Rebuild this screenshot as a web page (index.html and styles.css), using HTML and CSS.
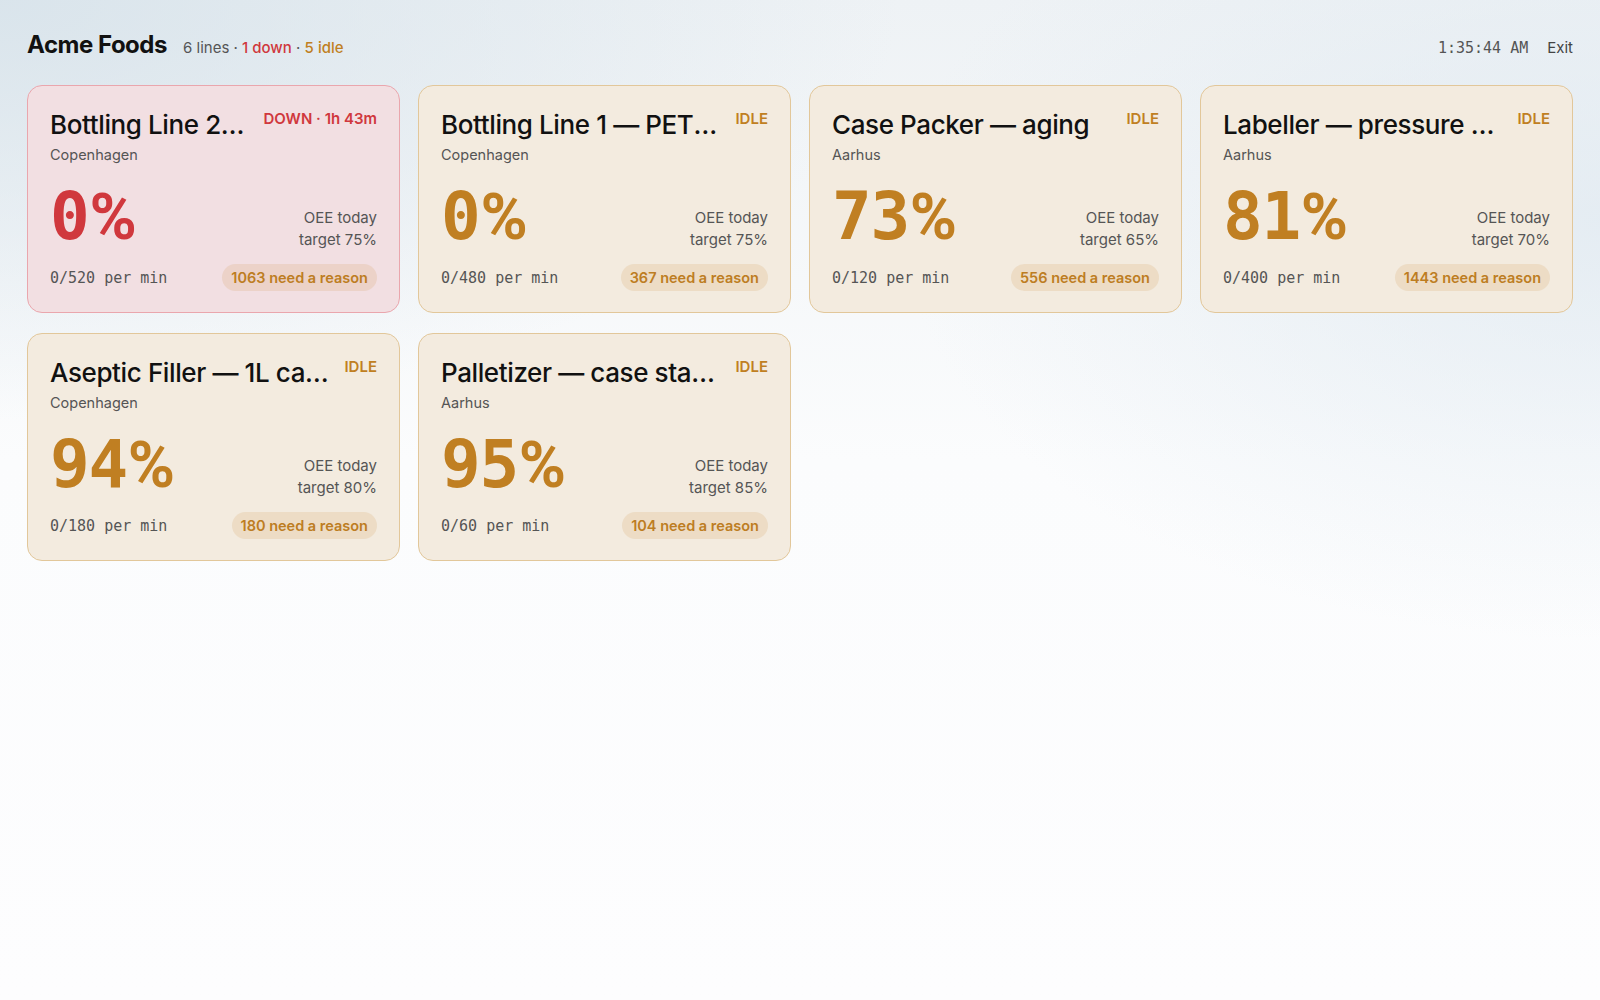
FILE: index.html
```html
<!DOCTYPE html>
<html lang="en">
<head>
  <meta charset="UTF-8" />
  <meta name="viewport" content="width=device-width, initial-scale=1.0"/>
  <title>Acme Foods — Floor</title>
  <link rel="stylesheet" href="styles.css">
</head>
<body>

  <!-- Top bar -->
  <header class="topbar">
    <div class="brand">
      <h1>Acme Foods</h1>
      <span class="summary">6 lines · <span class="is-down">1 down</span> · <span class="is-idle">5 idle</span></span>
    </div>
    <div class="topbar-right">
      <span class="clock">1:35:44 AM</span>
      <a class="exit" href="#">Exit</a>
    </div>
  </header>

  <!-- Line cards -->
  <main class="lines">

    <div class="card down">
      <div class="card-head">
        <h2 class="line-name">Bottling Line 2 — Glass 750ml</h2>
        <span class="status">DOWN · 1h 43m</span>
      </div>
      <div class="site">Copenhagen</div>
      <div class="card-mid">
        <span class="oee">0<span class="pct">%</span></span>
        <div class="oee-meta">
          <span>OEE today</span>
          <span>target 75%</span>
        </div>
      </div>
      <div class="card-foot">
        <span class="rate">0/520 per min</span>
        <span class="reasons">1063 need a reason</span>
      </div>
    </div>

    <div class="card idle">
      <div class="card-head">
        <h2 class="line-name">Bottling Line 1 — PET 500ml</h2>
        <span class="status">IDLE</span>
      </div>
      <div class="site">Copenhagen</div>
      <div class="card-mid">
        <span class="oee">0<span class="pct">%</span></span>
        <div class="oee-meta">
          <span>OEE today</span>
          <span>target 75%</span>
        </div>
      </div>
      <div class="card-foot">
        <span class="rate">0/480 per min</span>
        <span class="reasons">367 need a reason</span>
      </div>
    </div>

    <div class="card idle">
      <div class="card-head">
        <h2 class="line-name">Case Packer — aging</h2>
        <span class="status">IDLE</span>
      </div>
      <div class="site">Aarhus</div>
      <div class="card-mid">
        <span class="oee">73<span class="pct">%</span></span>
        <div class="oee-meta">
          <span>OEE today</span>
          <span>target 65%</span>
        </div>
      </div>
      <div class="card-foot">
        <span class="rate">0/120 per min</span>
        <span class="reasons">556 need a reason</span>
      </div>
    </div>

    <div class="card idle">
      <div class="card-head">
        <h2 class="line-name">Labeller — pressure sensitive</h2>
        <span class="status">IDLE</span>
      </div>
      <div class="site">Aarhus</div>
      <div class="card-mid">
        <span class="oee">81<span class="pct">%</span></span>
        <div class="oee-meta">
          <span>OEE today</span>
          <span>target 70%</span>
        </div>
      </div>
      <div class="card-foot">
        <span class="rate">0/400 per min</span>
        <span class="reasons">1443 need a reason</span>
      </div>
    </div>

    <div class="card idle">
      <div class="card-head">
        <h2 class="line-name">Aseptic Filler — 1L cartons</h2>
        <span class="status">IDLE</span>
      </div>
      <div class="site">Copenhagen</div>
      <div class="card-mid">
        <span class="oee">94<span class="pct">%</span></span>
        <div class="oee-meta">
          <span>OEE today</span>
          <span>target 80%</span>
        </div>
      </div>
      <div class="card-foot">
        <span class="rate">0/180 per min</span>
        <span class="reasons">180 need a reason</span>
      </div>
    </div>

    <div class="card idle">
      <div class="card-head">
        <h2 class="line-name">Palletizer — case stacking</h2>
        <span class="status">IDLE</span>
      </div>
      <div class="site">Aarhus</div>
      <div class="card-mid">
        <span class="oee">95<span class="pct">%</span></span>
        <div class="oee-meta">
          <span>OEE today</span>
          <span>target 85%</span>
        </div>
      </div>
      <div class="card-foot">
        <span class="rate">0/60 per min</span>
        <span class="reasons">104 need a reason</span>
      </div>
    </div>

  </main>

</body>
</html>
```

FILE: styles.css
```css
body {
  margin: 0;
  min-height: 100vh;
  font-family: 'Inter', 'Open Sans', sans-serif;
  color: #111;
  background:
    radial-gradient(ellipse 900px 420px at 0 0, rgba(214, 226, 234, 0.85), rgba(214, 226, 234, 0) 100%),
    radial-gradient(ellipse 700px 420px at 100% 220px, rgba(222, 232, 240, 0.7), rgba(222, 232, 240, 0) 100%),
    linear-gradient(to bottom, #eef2f5 0, #fbfcfd 460px, #fdfdfe 100%);
}

/* top bar */
.topbar {
  display: flex;
  justify-content: space-between;
  align-items: baseline;
  padding: 29px 27px 0;
  margin-bottom: 24px;
}

.brand {
  display: flex;
  align-items: baseline;
  gap: 16px;
}

.brand h1 {
  margin: 0;
  font-size: 24px;
  line-height: 32px;
  font-weight: 700;
  letter-spacing: -0.02em;
}

.summary {
  font-size: 15px;
  color: #555;
}

.is-down {
  color: #d0383d;
  font-weight: 500;
}

.is-idle {
  color: #c07f22;
  font-weight: 500;
}

.topbar-right {
  display: flex;
  align-items: baseline;
  gap: 19px;
}

.clock {
  font-family: 'DejaVu Sans Mono', 'Liberation Mono', monospace;
  font-size: 15px;
  color: #555;
}

.exit {
  font-size: 15px;
  color: #444;
  text-decoration: none;
}

/* grid of line cards */
.lines {
  display: grid;
  grid-template-columns: repeat(4, 1fr);
  gap: 20px 18px;
  padding: 0 27px;
}

.card {
  display: flex;
  flex-direction: column;
  padding: 22px 22px 21px;
  border-radius: 15px;
  border: 1px solid #e2c79a;
  background: #f3ebdf;
  min-width: 0;
}

.card.down {
  border-color: #eaa6ad;
  background: #f2dfe2;
}

.card-head {
  display: flex;
  justify-content: space-between;
  align-items: flex-start;
  gap: 14px;
}

.line-name {
  margin: 0;
  min-width: 0;
  font-size: 26px;
  line-height: 34px;
  font-weight: 500;
  letter-spacing: -0.015em;
  white-space: nowrap;
  overflow: hidden;
  text-overflow: ellipsis;
}

.status {
  flex-shrink: 0;
  margin-top: 1px;
  font-size: 15px;
  line-height: 20px;
  font-weight: 600;
}

.idle .status,
.idle .oee {
  color: #c07f22;
}

.down .status,
.down .oee {
  color: #d0383d;
}

.site {
  margin-top: 3px;
  font-size: 14.5px;
  line-height: 20px;
  color: #555;
}

.card-mid {
  display: flex;
  justify-content: space-between;
  align-items: flex-end;
  margin-top: 19px;
}

.oee {
  font-family: 'DejaVu Sans Mono', 'Liberation Mono', monospace;
  font-size: 66px;
  line-height: 66px;
  font-weight: 700;
  letter-spacing: -0.02em;
}

/* the mono % sign is too small, borrow a full-height one */
.oee .pct {
  font-family: 'Roboto', 'Inter', sans-serif;
  font-size: 64px;
  font-weight: 700;
  letter-spacing: -0.08em;
  margin-left: 1px;
}

.oee-meta {
  display: flex;
  flex-direction: column;
  align-items: flex-end;
  font-size: 15px;
  line-height: 22px;
  color: #555;
}

.card-foot {
  display: flex;
  justify-content: space-between;
  align-items: center;
  margin-top: 13px;
}

.rate {
  font-family: 'DejaVu Sans Mono', 'Liberation Mono', monospace;
  font-size: 15px;
  color: #555;
}

.reasons {
  padding: 4px 9px;
  border-radius: 14px;
  background: rgba(205, 150, 70, 0.17);
  color: #bd7d22;
  font-size: 14.5px;
  line-height: 19px;
  font-weight: 600;
}
```
